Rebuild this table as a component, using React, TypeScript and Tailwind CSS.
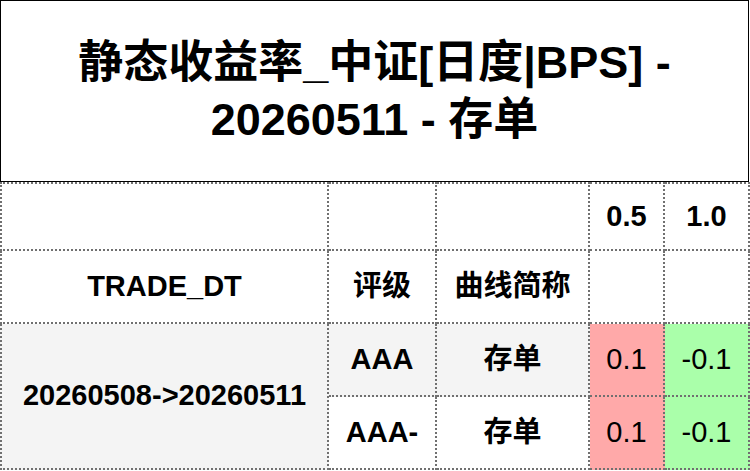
const font = { fontFamily: '"Liberation Sans", "Noto Sans CJK SC", sans-serif' };

// each cell draws its right and bottom edges; the outer left/top edges are added per cell
const cell = "border-r-2 border-b-2 border-dotted border-[#707070] text-center align-middle p-0";
const first = "border-l-2";
const top = "border-t-2";

export default function App() {
  return (
    <div className="w-[750px] h-[471px] bg-white text-black" style={font}>
      <div className="w-[749px] h-[182px] border border-black flex items-center justify-center">
        <h1 className="text-[45px] leading-[57px] font-bold text-center px-[40px]">
          静态收益率_中证[日度|BPS] -<br />20260511 - 存单
        </h1>
      </div>
      <table className="table-fixed border-separate border-spacing-0 w-[750px] text-[29px]">
        <colgroup>
          <col className="w-[329px]" />
          <col className="w-[108px]" />
          <col className="w-[153px]" />
          <col className="w-[75px]" />
          <col className="w-[85px]" />
        </colgroup>
        <tbody>
          <tr className="h-[69px] font-bold">
            <td className={`${cell} ${first} ${top}`}></td>
            <td className={`${cell} ${top}`}></td>
            <td className={`${cell} ${top}`}></td>
            <td className={`${cell} ${top}`}>0.5</td>
            <td className={`${cell} ${top}`}>1.0</td>
          </tr>
          <tr className="h-[73px] font-bold">
            <td className={`${cell} ${first}`}>TRADE_DT</td>
            <td className={cell}>评级</td>
            <td className={cell}>曲线简称</td>
            <td className={cell}></td>
            <td className={cell}></td>
          </tr>
          <tr className="h-[73px]">
            <td rowSpan={2} className={`${cell} ${first} bg-[#f4f4f4] font-bold`}>
              20260508-&gt;20260511
            </td>
            <td className={`${cell} bg-[#f4f4f4] font-bold`}>AAA</td>
            <td className={`${cell} bg-[#f4f4f4] font-bold`}>存单</td>
            <td className={`${cell} bg-[#ffa9a9]`}>0.1</td>
            <td className={`${cell} bg-[#aaffaa]`}>-0.1</td>
          </tr>
          <tr className="h-[73px]">
            <td className={`${cell} font-bold`}>AAA-</td>
            <td className={`${cell} font-bold`}>存单</td>
            <td className={`${cell} bg-[#ffa9a9]`}>0.1</td>
            <td className={`${cell} bg-[#aaffaa]`}>-0.1</td>
          </tr>
        </tbody>
      </table>
    </div>
  );
}
